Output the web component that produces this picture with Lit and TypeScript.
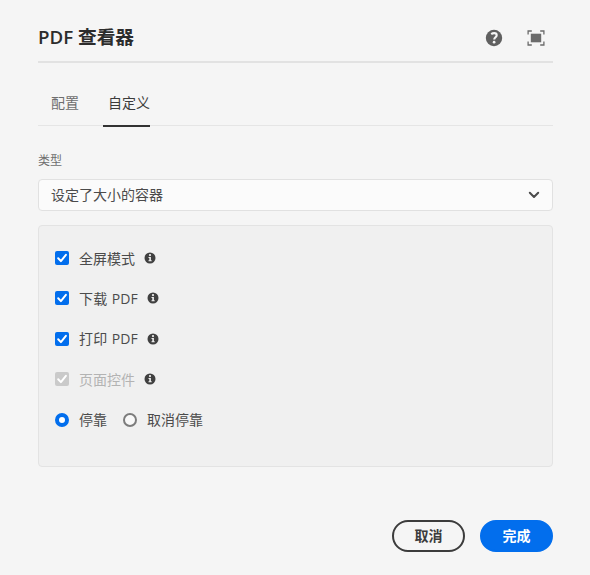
import { LitElement, html, css, svg, nothing } from "lit";
import { customElement, property, state } from "lit/decorators.js";
import { classMap } from "lit/directives/class-map.js";

interface Option {
  label: string;
  checked: boolean;
  disabled?: boolean;
}

const infoIcon = html`<svg class="info" viewBox="0 0 12 12" width="12" height="12">
  <circle cx="6" cy="6" r="5.5" fill="#404040"></circle>
  <circle cx="6" cy="3.1" r="1.1" fill="#f0f0f0"></circle>
  <path d="M4.5 4.900h2.400v3.400h.8v1H4.500v-1h.8V5.900h-.8z" fill="#f0f0f0"></path>
</svg>`;

@customElement("option-row")
class OptionRow extends LitElement {
  @property({ type: String }) label = "";
  @property({ type: Boolean }) checked = false;
  @property({ type: Boolean }) disabled = false;

  static styles = css`
    :host { display: block; }
    .row { display: flex; align-items: center; height: 20px; color: #4b4b4b; }
    .box { width: 14px; height: 14px; border-radius: 2px; background: #026eed; flex: none; }
    .off { color: #b3b3b3; }
    .off .box { background: #cacaca; }
    .box svg { display: block; }
    .text { margin-left: 10px; line-height: 20px; padding-top: 1px; white-space: pre; }
    .latin { word-spacing: 0.4px; letter-spacing: 0.2px; }
    .info { margin-left: 9px; flex: none; }
  `;

  render() {
    return html`<div class=${classMap({ row: true, off: this.disabled })}>
      <span class="box">
        ${this.checked
          ? html`<svg viewBox="0 0 14 14" width="14" height="14">
              <path d="M3.2 7.3 5.9 10.1 10.9 3.9" fill="none" stroke="#fff" stroke-width="2" stroke-linecap="round" stroke-linejoin="round"></path>
            </svg>`
          : nothing}
      </span>
      <span class=${classMap({ text: true, latin: /[A-Z]/.test(this.label) })}>${this.label}</span>
      ${infoIcon}
    </div>`;
  }
}

@customElement("app-root")
class AppRoot extends LitElement {
  @state() private docked = true;

  private options: Option[] = [
    { label: "全屏模式", checked: true },
    { label: "下载 PDF", checked: true },
    { label: "打印 PDF", checked: true },
    { label: "页面控件", checked: true, disabled: true },
  ];

  static styles = css`
    :host {
      display: flex;
      flex-direction: column;
      box-sizing: border-box;
      height: 575px;
      padding: 15px 37px 0 38px;
      background: #f5f5f5;
      color: #4b4b4b;
      font: 14px/20px "Open Sans", "Noto Sans CJK SC", sans-serif;
    }
    header {
      display: flex;
      align-items: center;
      height: 46px;
      border-bottom: 2px solid #e2e2e2;
    }
    h1 { flex: 1; margin: 0 0 2px; font-size: 18.7px; line-height: 26px; font-weight: 600; color: #2c2c2c; }
    .help { margin-right: 24px; }
    .full { margin-right: 8px; }
    .tabs { display: flex; height: 62px; border-bottom: 1px solid #e5e5e5; }
    .tab { box-sizing: border-box; height: 64px; padding: 30px 0 0; color: #6e6e6e; }
    .tab:first-child { margin: 0 24px 0 13px; }
    .tab.active { padding-left: 5px; width: 47px; border-bottom: 2px solid #323232; color: #3c3c3c; white-space: nowrap; }
    .label { margin-top: 26px; font-size: 12px; line-height: 18px; color: #6e6e6e; }
    .select {
      display: flex;
      box-sizing: border-box;
      align-items: center;
      justify-content: space-between;
      height: 32px;
      margin-top: 9px;
      padding: 0 12px;
      border: 1px solid #e1e1e1;
      border-radius: 4px;
      background: #fbfbfb;
    }
    .panel {
      box-sizing: border-box;
      height: 242px;
      margin-top: 14px;
      padding: 22px 16px 0;
      border: 1px solid #e3e3e3;
      border-radius: 4px;
      background: #f0f0f0;
      display: flex;
      flex-direction: column;
      gap: 20.4px;
    }
    .radios { display: flex; align-items: center; height: 20px; }
    .radio { display: flex; align-items: center; margin-right: 16px; }
    .dot { box-sizing: border-box; width: 14px; height: 14px; margin-right: 10px; border: 2px solid #7c7c7c; border-radius: 50%; background: #f8f8f8; }
    .dot.on { border: 4.5px solid #026eed; background: #fff; }
    footer { display: flex; justify-content: flex-end; gap: 15px; margin-top: 52.5px; }
    button {
      box-sizing: border-box;
      height: 32px;
      width: 73px;
      padding: 0;
      border: 2px solid #3c3c3c;
      border-radius: 16px;
      background: transparent;
      color: #3c3c3c;
      font: 600 14px/20px "Open Sans", "Noto Sans CJK SC", sans-serif;
    }
    button.primary { border-color: #026eed; background: #026eed; color: #fff; font-weight: 700; }
  `;

  private fullscreenIcon = svg`
    <rect x="3.8" y="3.700" width="10.400" height="8.600" fill="#6b6b6b"></rect>
    <path d="M1.100 4.600V1H4.800M13.200 1h3.700v3.600M16.900 11.400V15H13.200M4.800 15H1.100v-3.600" fill="none" stroke="#6b6b6b" stroke-width="1.300"></path>`;

  render() {
    return html`
      <header>
        <h1>PDF 查看器</h1>
        <svg class="help" viewBox="0 0 18 18" width="18" height="18">
          <circle cx="9" cy="9" r="8.200" fill="#606060"></circle>
          <path d="M6.2 5.100C7.300 4.300 8.200 4.100 9.200 4.100c1.500 0 2.500.8 2.500 2.100 0 1.900-2.500 2.100-2.500 4.300" fill="none" stroke="#f5f5f5" stroke-width="2.100"></path>
          <circle cx="9.100" cy="13.200" r="1.350" fill="#f5f5f5"></circle>
        </svg>
        <svg class="full" viewBox="0 0 18 16" width="18" height="16">${this.fullscreenIcon}</svg>
      </header>
      <nav class="tabs">
        <div class="tab">配置</div>
        <div class="tab active">自定义</div>
      </nav>
      <div class="label">类型</div>
      <div class="select">
        <span>设定了大小的容器</span>
        <svg viewBox="0 0 12 8" width="12" height="8">
          <path d="M1.800 1.800 6 6l4.200-4.200" fill="none" stroke="#4b4b4b" stroke-width="2" stroke-linecap="round" stroke-linejoin="round"></path>
        </svg>
      </div>
      <section class="panel">
        ${this.options.map(
          (o) => html`<option-row .label=${o.label} .checked=${o.checked} .disabled=${!!o.disabled}></option-row>`,
        )}
        <div class="radios">
          <span class="radio" @click=${() => (this.docked = true)}>
            <span class=${classMap({ dot: true, on: this.docked })}></span>停靠
          </span>
          <span class="radio" @click=${() => (this.docked = false)}>
            <span class=${classMap({ dot: true, on: !this.docked })}></span>取消停靠
          </span>
        </div>
      </section>
      <footer>
        <button>取消</button>
        <button class="primary">完成</button>
      </footer>
    `;
  }
}
